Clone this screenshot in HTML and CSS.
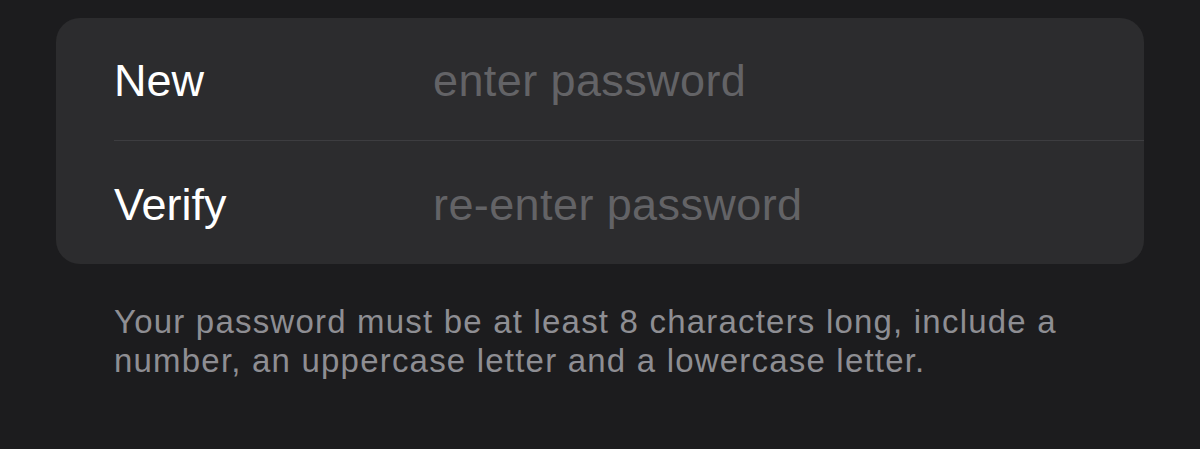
FILE: index.html
```html
<!DOCTYPE html>
<html lang="en">
<head>
  <meta charset="UTF-8">
  <meta name="viewport" content="width=device-width, initial-scale=1.0">
  <title>Change Password</title>
  <link rel="stylesheet" href="styles.css">
</head>
<body>
  <div class="page">
    <div class="group">
      <label class="row">
        <span class="label">New</span>
        <input class="field" type="password" placeholder="enter password">
      </label>
      <label class="row">
        <span class="label">Verify</span>
        <input class="field" type="password" placeholder="re-enter password">
      </label>
    </div>
    <p class="hint">Your password must be at least 8 characters long, include a number, an uppercase letter and a lowercase letter.</p>
  </div>
</body>
</html>
```

FILE: styles.css
```css
/* General styling */
body {
  margin: 0;
  background-color: #1c1c1e;
  font-family: "Liberation Sans", Arial, sans-serif;
  color: #fff;
}

.page {
  padding: 18px 56px 0 56px;
}

/* Grouped inputs */
.group {
  background-color: #2c2c2e;
  border-radius: 24px;
  padding-left: 58px;
}

.row {
  display: flex;
  align-items: center;
  height: 122px;
  box-sizing: border-box;
}

.row + .row {
  border-top: 1px solid #3d3d40;
  height: 124px;
}

.label {
  width: 319px;
  flex-shrink: 0;
  font-size: 45px;
  padding-top: 4px;
}

.field {
  flex: 1;
  background: transparent;
  border: none;
  outline: none;
  padding: 0;
  margin: 0;
  color: #fff;
  font-family: inherit;
  font-size: 45px;
  letter-spacing: 0.4px;
  padding-top: 4px;
}

.field::placeholder {
  color: #636366;
}

/* Footer hint */
.hint {
  margin: 0;
  padding: 38px 0 0 58px;
  font-size: 33px;
  line-height: 39px;
  letter-spacing: 1.2px;
  color: #8e8e93;
  max-width: 980px;
}
```
